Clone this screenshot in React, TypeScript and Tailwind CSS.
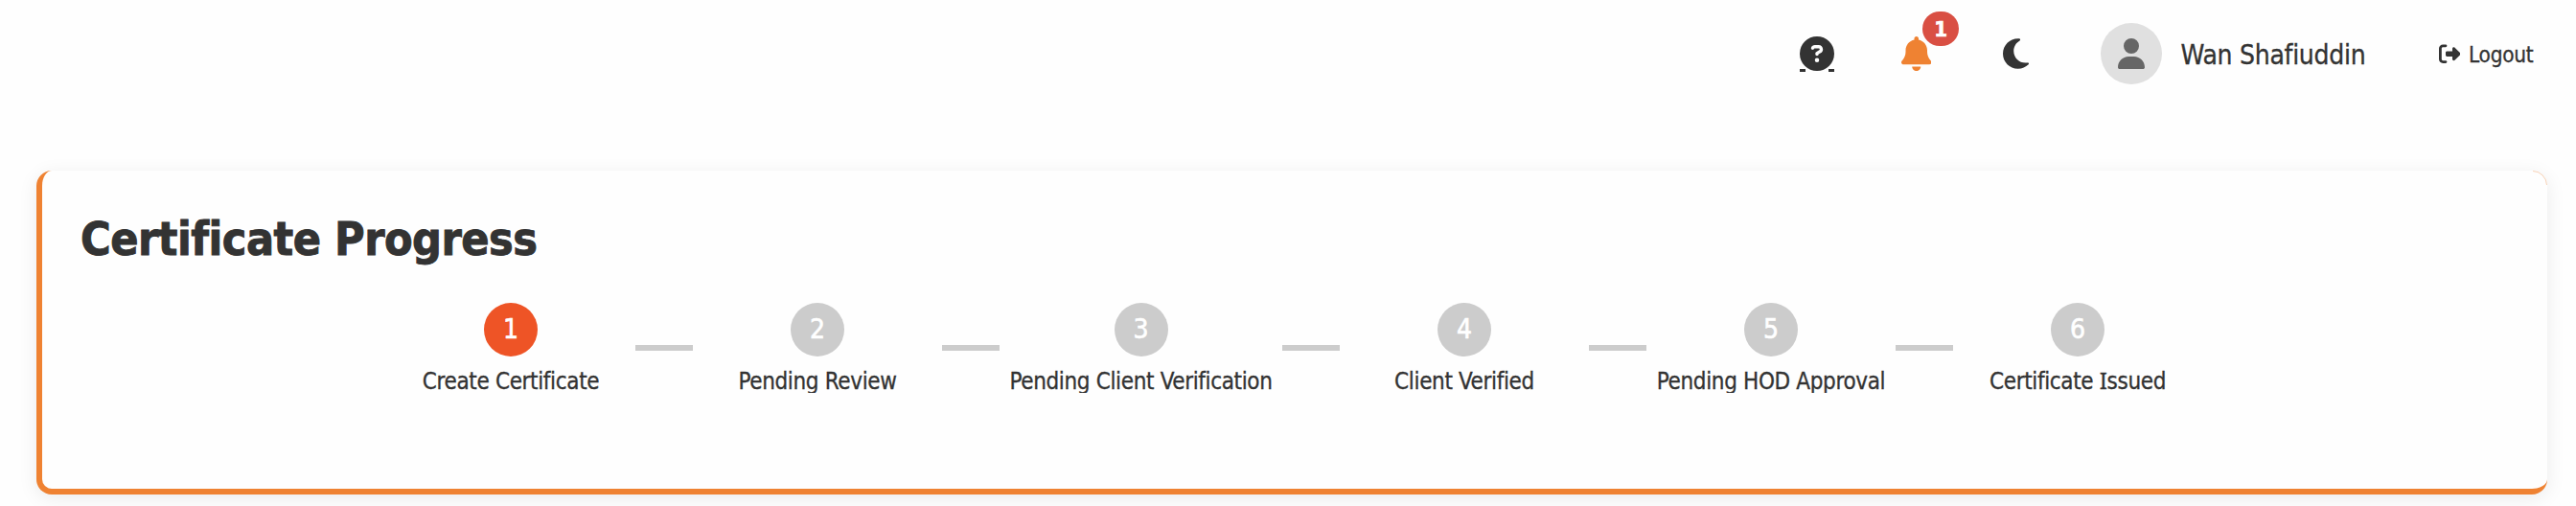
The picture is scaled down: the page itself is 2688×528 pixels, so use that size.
import { FaBell, FaCircleQuestion, FaMoon, FaRightFromBracket, FaUser } from "react-icons/fa6";

const steps = [
  <>Create Certificate</>,
  <>Pending Review</>,
  <>Pending Client Verification</>,
  <>Client Verified</>,
  <>Pending HOD Approval</>,
  <>
    Certificate <span className="font-['Noto_Sans',sans-serif] leading-none">I</span>ssued
  </>,
];

function Header() {
  return (
    <header className="flex h-28 items-center justify-end pr-[44px]">
      <button className="flex h-[37px] w-9 flex-col">
        <span className="relative">
          <FaCircleQuestion className="block size-9" />
          <span className="absolute top-[34px] left-0 h-[3px] w-1.5 bg-[#333]" />
          <span className="absolute top-[34px] right-0 h-[3px] w-1.5 bg-[#333]" />
        </span>
      </button>
      <button className="relative ml-[70px]">
        <FaBell className="block h-9 w-[31.5px] text-[#ef8232]" />
        <span className="absolute -top-[26px] left-[22.5px] flex h-9 w-[38px] items-center justify-center rounded-[18px] bg-[#d94f43] text-[22px] font-bold text-white [-webkit-text-stroke:0.6px]">
          1
        </span>
      </button>
      <button className="ml-[74.5px]">
        <FaMoon className="block h-9 w-[27px]" />
      </button>
      <div className="ml-[75px] flex items-center">
        <div className="flex size-16 items-center justify-center rounded-full bg-[#e0e0e0]">
          <FaUser className="block h-8 w-7 text-[#666]" />
        </div>
        <span className="ml-5 w-[194px] pt-[3px] text-[28px] leading-9 tracking-[-0.28px] whitespace-nowrap">
          Wan Shafiuddin
        </span>
      </div>
      <button className="ml-[75px] flex items-center">
        <FaRightFromBracket className="block size-[22.4px]" />
        <span className="ml-[9px] w-[68px] pt-0.5 text-left text-[22.4px] leading-7 tracking-[-0.25px] whitespace-nowrap">
          Logout
        </span>
      </button>
    </header>
  );
}

function Stepper() {
  return (
    <div className="mt-[38px] flex items-center justify-center gap-2.5 pr-px">
      {steps.map((label, i) => (
        <div key={i} className="contents">
          {i > 0 && <div className="h-1.5 w-[60px] bg-[#ccc]" />}
          <div className={`flex flex-col items-center ${i === 2 ? "w-[275px]" : "w-60"}`}>
            <div
              className={`flex size-14 items-center justify-center rounded-full text-[28px] text-white [-webkit-text-stroke:0.6px] ${i === 0 ? "bg-[#ee5426]" : "bg-[#ccc]"}`}
            >
              {i + 1}
            </div>
            <div className="mt-2.5 h-7 overflow-hidden text-2xl leading-8 tracking-[-0.35px] whitespace-nowrap">
              {label}
            </div>
          </div>
        </div>
      ))}
    </div>
  );
}

export default function App() {
  return (
    <div className="h-[528px] overflow-hidden bg-[#fefefe] font-['DejaVu_Sans_Condensed','DejaVu_Sans',sans-serif] text-[#333] [font-stretch:condensed] [-webkit-text-stroke:0.3px]">
      <Header />
      <main className="pt-[66px] pr-[30px] pl-[38px]">
        <section className="relative h-[338px] rounded-2xl border-b-6 border-l-6 border-[#ef8232] bg-[#fefefe] px-10 pt-10 shadow-[0_4px_20px_rgba(0,0,0,0.08)]">
          <svg className="absolute top-0 right-0 size-4" viewBox="0 0 16 16" fill="none">
            <path d="M1 .5A15 15 0 0 1 15.5 15" stroke="#ef8232" strokeOpacity="0.35" />
          </svg>
          <h1 className="h-[60px] pt-px text-5xl leading-[60px] font-bold tracking-[-0.5px] whitespace-nowrap [-webkit-text-stroke:0.9px]">
            Certificate Progress
          </h1>
          <Stepper />
        </section>
      </main>
    </div>
  );
}
